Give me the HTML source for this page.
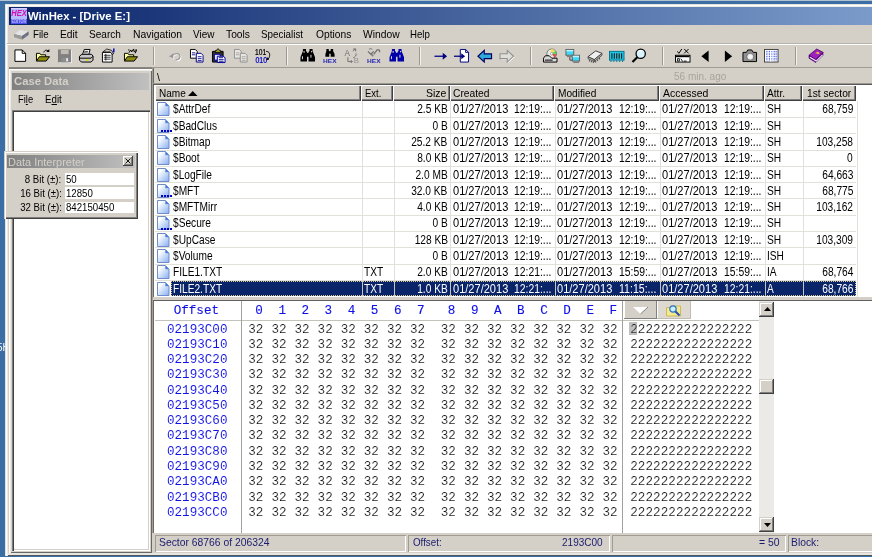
<!DOCTYPE html>
<html><head><meta charset="utf-8"><title>WinHex - [Drive E:]</title>
<style>
html,body{margin:0;padding:0}
body{width:872px;height:557px;overflow:hidden;position:relative;background:#3a6ea5;font-family:"Liberation Sans",sans-serif;font-size:11px;color:#000}
#root{position:absolute;left:0;top:0;width:872px;height:557px;will-change:transform}
.a{position:absolute}
.t{position:absolute;white-space:pre;line-height:1;transform-origin:0 0}
.r{position:absolute;white-space:pre;line-height:1;transform-origin:100% 0;text-align:right}
.hx{position:absolute;white-space:pre;line-height:1;font-family:"Liberation Mono",monospace;font-size:12.6px;color:#101010;-webkit-text-stroke:0.15px #fff}
.hd{position:absolute;background:#d4d0c8;box-shadow:inset 1px 1px 0 #fff, inset -1px -1px 0 #404040, inset -2px -2px 0 #808080}
svg{position:absolute;overflow:visible}
</style></head><body><div id="root">
<div class="a" style="left:0;top:0;width:900px;height:1px;background:#b4c2d0"></div>
<div class="t" style="left:-3.0px;top:343.0px;font-size:10.00px;color:#fff;transform:scaleX(1.000);">5H</div>
<div class="a" style="left:5px;top:4px;width:880px;height:552px;background:#d4d0c8;box-shadow:inset 1px 1px 0 #e4e2dc, inset 2px 2px 0 #fff, inset 3px 3px 0 #eceae4, inset 0 -1px 0 #505860, inset 0 -3px 0 #e8e6e0"></div>
<div class="a" style="left:9px;top:7px;width:1200px;height:18px;background:linear-gradient(90deg,#0a246a 0px,#a6caf0 1200px)"></div>
<svg style="left:11px;top:8px" width="16" height="16" viewBox="0 0 16 16"><rect width="16" height="16" fill="#b8b8ff"/><rect y="0" width="16" height="1" fill="#d8d0ff"/><rect y="11" width="16" height="5" fill="#5050f0"/><text x="0.2" y="7.7" font-family="Liberation Sans" font-weight="bold" font-style="italic" font-size="8.8" fill="#d010b0" textLength="15.6" lengthAdjust="spacingAndGlyphs">HEX</text><text x="0.5" y="14.8" font-family="Liberation Sans" font-weight="bold" font-size="4.6" fill="#b8b8ff" textLength="15" lengthAdjust="spacingAndGlyphs">EDITOR</text></svg>
<div class="t" style="left:28.3px;top:10.8px;font-size:11.20px;color:#fff;transform:scaleX(1.013);font-weight:bold;">WinHex - [Drive E:]</div>
<svg style="left:13px;top:28px" width="17" height="13" viewBox="0 0 17 13"><path d="M1 6 L7 1.5 L15.5 3.5 L15.5 7 L9 11.5 L1 9 Z" fill="#a0a0a0"/><path d="M1 6 L7 1.5 L15.5 3.5 L9 8 Z" fill="#e4e4e4"/><path d="M9 8 L15.5 3.5 L15.5 7 L9 11.5 Z" fill="#707078"/><path d="M1 6 L9 8 L9 11.5 L1 9 Z" fill="#9a9a9a"/><rect x="11.5" y="7" width="2" height="1.3" fill="#6a78d8" transform="rotate(-32 12.5 7.6)"/></svg>
<div class="t" style="left:33.4px;top:29.5px;font-size:10.40px;color:#000;transform:scaleX(0.931);">File</div><div class="t" style="left:60.3px;top:29.5px;font-size:10.40px;color:#000;transform:scaleX(0.988);">Edit</div><div class="t" style="left:89.4px;top:29.5px;font-size:10.40px;color:#000;transform:scaleX(0.968);">Search</div><div class="t" style="left:132.8px;top:29.5px;font-size:10.40px;color:#000;transform:scaleX(0.999);">Navigation</div><div class="t" style="left:193.3px;top:29.5px;font-size:10.40px;color:#000;transform:scaleX(0.957);">View</div><div class="t" style="left:226.1px;top:29.5px;font-size:10.40px;color:#000;transform:scaleX(0.989);">Tools</div><div class="t" style="left:261.4px;top:29.5px;font-size:10.40px;color:#000;transform:scaleX(0.946);">Specialist</div><div class="t" style="left:315.7px;top:29.5px;font-size:10.40px;color:#000;transform:scaleX(0.985);">Options</div><div class="t" style="left:362.8px;top:29.5px;font-size:10.40px;color:#000;transform:scaleX(0.990);">Window</div><div class="t" style="left:410.3px;top:29.5px;font-size:10.40px;color:#000;transform:scaleX(0.930);">Help</div>
<div class="a" style="left:7px;top:43px;width:870px;height:1px;background:#b8b4ac"></div><div class="a" style="left:7px;top:44px;width:870px;height:1px;background:#fff"></div>
<div class="a" style="left:9px;top:67px;width:870px;height:1px;background:#a09c94"></div><div class="a" style="left:9px;top:67px;width:143px;height:1px;background:#8a8680"></div><div class="a" style="left:9px;top:68px;width:143px;height:1px;background:#807c76"></div>
<div class="a" style="left:152.9px;top:47px;width:1px;height:18px;background:#9c988f"></div><div class="a" style="left:153.9px;top:47px;width:1px;height:18px;background:#f4f2ee"></div>
<div class="a" style="left:286.3px;top:47px;width:1px;height:18px;background:#9c988f"></div><div class="a" style="left:287.3px;top:47px;width:1px;height:18px;background:#f4f2ee"></div>
<div class="a" style="left:418.9px;top:47px;width:1px;height:18px;background:#9c988f"></div><div class="a" style="left:419.9px;top:47px;width:1px;height:18px;background:#f4f2ee"></div>
<div class="a" style="left:529.5px;top:47px;width:1px;height:18px;background:#9c988f"></div><div class="a" style="left:530.5px;top:47px;width:1px;height:18px;background:#f4f2ee"></div>
<div class="a" style="left:662.2px;top:47px;width:1px;height:18px;background:#9c988f"></div><div class="a" style="left:663.2px;top:47px;width:1px;height:18px;background:#f4f2ee"></div>
<div class="a" style="left:794.5px;top:47px;width:1px;height:18px;background:#9c988f"></div><div class="a" style="left:795.5px;top:47px;width:1px;height:18px;background:#f4f2ee"></div>
<svg style="left:13.2px;top:48.3px" width="15.5" height="15.5" viewBox="0 0 16 16"><path d="M2 2h7.5l3.5 3.5v8.3h-11z" fill="#fff" stroke="#000"/><path d="M9.5 2v3.5h3.5" fill="none" stroke="#000"/></svg>
<svg style="left:35.0px;top:48.3px" width="15.5" height="15.5" viewBox="0 0 16 16"><path d="M1.5 13.5v-8h3.5l1 1.5h5v2" fill="#ffffa0" stroke="#000"/><path d="M1.5 13.5l3-4.5h10.5l-3.5 4.5z" fill="#908c10" stroke="#000"/><path d="M9 4.5c1-2.5 3.5-3 5-1" fill="none" stroke="#000"/><path d="M14.8 1v3.2h-3.2z" fill="#000"/></svg>
<svg style="left:57.0px;top:48.3px" width="15.5" height="15.5" viewBox="0 0 16 16"><rect x="2.2" y="2.2" width="13" height="13.3" fill="#fff"/><rect x="1" y="1.5" width="13.5" height="13.3" fill="#808080"/><rect x="4" y="2" width="8" height="4.3" fill="#c0bcb4"/><rect x="4.5" y="10" width="7.5" height="4.8" fill="#8c8c8c"/><rect x="9.5" y="10.5" width="1.8" height="3.3" fill="#f0f0f0"/></svg>
<svg style="left:78.0px;top:48.3px" width="15.5" height="15.5" viewBox="0 0 16 16"><path d="M4.5 7l2-5.5h6l-1.5 5.5z" fill="#fff" stroke="#000"/><path d="M6.5 3.5h4M6 5h4" stroke="#000" stroke-width=".7"/><path d="M1.5 8.5l2.5-2h10l1.5 2v4l-2 2h-10l-2-2z" fill="#c8c8c8" stroke="#000"/><path d="M1.5 10.5h12l2-2" fill="none" stroke="#000"/><rect x="8" y="11.5" width="3" height="1.5" fill="#e8e000"/></svg>
<svg style="left:100.0px;top:48.3px" width="15.5" height="15.5" viewBox="0 0 16 16"><path d="M2.5 4.5h10v10h-10z" fill="#fff" stroke="#000"/><path d="M4 7.5h7M4 9.5h7M4 11.5h7M6 6v7" stroke="#000" stroke-width=".8"/><path d="M3 4l4-3 5 1.5 2 3.5-1.5 0.5-2-2.5h-4z" fill="#d4d0c8" stroke="#000" stroke-width=".8"/><rect x="13.5" y="0.5" width="1.5" height="4" fill="#0000c0"/></svg>
<svg style="left:122.5px;top:48.3px" width="15.5" height="15.5" viewBox="0 0 16 16"><path d="M1.5 13.5v-8h3.5l1 1.5h5v2" fill="#ffffa0" stroke="#000"/><path d="M1.5 13.5l3-4.5h10.5l-3.5 4.5z" fill="#908c10" stroke="#000"/><path d="M6 5l2-3 1 2 2-3 0.5 3 2.5-1.5-1.5 3" fill="none" stroke="#000" stroke-width="1"/><circle cx="13.5" cy="2" r=".8" fill="#000"/><circle cx="6" cy="2" r=".7" fill="#000"/></svg>
<svg style="left:168.0px;top:48.3px" width="15.5" height="15.5" viewBox="0 0 16 16"><g transform="translate(.8,.8)"><path d="M4 8.5C7 4.5 12.8 5 12.3 9.3 12 11.3 10.5 12.3 8 12.3" fill="none" stroke="#fff" stroke-width="1.3"/><path d="M1 8.8l4.5-3.5v5.8z" fill="#fff"/></g><path d="M4 8.5C7 4.5 12.8 5 12.3 9.3 12 11.3 10.5 12.3 8 12.3" fill="none" stroke="#989898" stroke-width="1.3"/><path d="M1 8.8l4.5-3.5v5.8z" fill="#989898"/></svg>
<svg style="left:189.0px;top:48.3px" width="15.5" height="15.5" viewBox="0 0 16 16"><path d="M1.5 1.5h5l2 2v7h-7z" fill="#fff" stroke="#000"/><path d="M3 5h3.5M3 7h3.5" stroke="#000080" stroke-width=".9"/><path d="M7.5 5.5h5l2 2v7h-7z" fill="#fff" stroke="#000080"/><path d="M9 9h4M9 11h4M9 13h4" stroke="#000080" stroke-width=".9"/></svg>
<svg style="left:211.0px;top:48.3px" width="15.5" height="15.5" viewBox="0 0 16 16"><path d="M1.5 3.5h11v11h-11z" fill="#303030" stroke="#000"/><path d="M4.5 4.5v-2h1.5l.5-1.5h1.5l.5 1.5h1.5v2z" fill="#b0a830" stroke="#000" stroke-width=".8"/><path d="M3.5 6.5h6v6h-6z" fill="#e8e8ff" stroke="#0000a0"/><path d="M6.5 8.5h6l2 1.5v5h-8z" fill="#fff" stroke="#0000a0"/><path d="M8 10h4.5M8 12h5M8 13.7h5" stroke="#000080" stroke-width=".9"/></svg>
<svg style="left:233.0px;top:48.3px" width="15.5" height="15.5" viewBox="0 0 16 16"><path d="M1.5 1.5h5l2 2v7h-7z" fill="#e8e6e0" stroke="#909090"/><path d="M3 5h3.5M3 7h3.5" stroke="#a0a0a0" stroke-width=".9"/><path d="M7.5 5.5h5l2 2v7h-7z" fill="#e8e6e0" stroke="#909090"/><path d="M9 9h4M9 11h4M9 13h4" stroke="#a0a0a0" stroke-width=".9"/></svg>
<svg style="left:254.5px;top:48.3px" width="15.5" height="15.5" viewBox="0 0 16 16"><text x="0" y="7.5" font-family="Liberation Sans" font-size="8.6" fill="#000" stroke="#000" stroke-width=".25" textLength="11.5" lengthAdjust="spacingAndGlyphs">101</text><text x="0.5" y="15.5" font-family="Liberation Sans" font-size="8.6" fill="#0000c0" stroke="#0000c0" stroke-width=".25" textLength="12" lengthAdjust="spacingAndGlyphs">010</text><path d="M11.5 3.5c3.5 0 4.5 3 3 6.5l-1.5 2" fill="none" stroke="#000" stroke-width="1"/><path d="M11.5 12.5l3-0.3-1.8-2.6z" fill="#000"/></svg>
<svg style="left:299.5px;top:48.3px" width="15.5" height="15.5" viewBox="0 0 16 16"><path d="M3 1h3.2v2l1 1.2v9.8h-6.7v-4.5l2.5-6.5zM13 1h-3.2v2l-1 1.2v9.8h6.7v-4.5l-2.5-6.5z" fill="#000"/><rect x="6.5" y="5" width="3" height="4" fill="#000"/><path d="M2.5 8.5v3M4.2 3v2M11.3 7v3M12 3v1.5" stroke="#fff" stroke-width=".9" fill="none"/></svg>
<svg style="left:321.5px;top:48.3px" width="15.5" height="15.5" viewBox="0 0 16 16"><path d="M4.5 1h2.5v1.5l0.7 0.8h0.6l0.7-0.8V1h2.5v2l1.5 3.5v2.5h-4V6h-1.5v3h-4V6.5L4.5 3z" fill="#000"/><text x="1" y="15.5" font-family="Liberation Sans" font-weight="bold" font-size="6.2" fill="#0000b0" fill-opacity=".85" textLength="14" lengthAdjust="spacingAndGlyphs">HEX</text></svg>
<svg style="left:343.5px;top:48.3px" width="15.5" height="15.5" viewBox="0 0 16 16"><text x="0.5" y="8" font-family="Liberation Sans" font-size="8.5" fill="#707070">A</text><text x="10" y="15.5" font-family="Liberation Sans" font-size="8" fill="#909090">B</text><path d="M9 3l3-2M12 1v2.5M12 1h-2.5M12.5 5.5c0.5 2-1 4-3 4.5M4 9.5v4.5h4.5M8.5 14l-1.5-1.5M8.5 14l-1.5 1.5" fill="none" stroke="#707070" stroke-width="1"/></svg>
<svg style="left:365.5px;top:48.3px" width="15.5" height="15.5" viewBox="0 0 16 16"><path d="M2 3.5l3 3 3-3M8 6.5l3.5-4.5 2.5 0M14 2v2.5M5 6l2.5 2.5" fill="none" stroke="#707070" stroke-width="1.3"/><path d="M3 1.5c1-1 2.5-1 3.5 0" stroke="#707070" fill="none"/><text x="1" y="15.5" font-family="Liberation Sans" font-weight="bold" font-size="6.2" fill="#0000b0" fill-opacity=".85" textLength="14" lengthAdjust="spacingAndGlyphs">HEX</text></svg>
<svg style="left:388.5px;top:48.3px" width="15.5" height="15.5" viewBox="0 0 16 16"><path d="M3 1h3.2v2l1 1.2v9.8h-6.7v-4.5l2.5-6.5zM13 1h-3.2v2l-1 1.2v9.8h6.7v-4.5l-2.5-6.5z" fill="#0000a8"/><rect x="6.5" y="5" width="3" height="4" fill="#0000a8"/><path d="M2.5 8.5v3M4.2 3v2M11.3 7v3M12 3v1.5" stroke="#fff" stroke-width=".9" fill="none"/></svg>
<svg style="left:433.5px;top:48.3px" width="15.5" height="15.5" viewBox="0 0 16 16"><path d="M0.5 8.5h11" stroke="#000080" stroke-width="1.3"/><path d="M9 5l4.5 3.5-4.5 3.5z" fill="#000080"/></svg>
<svg style="left:454.0px;top:48.3px" width="15.5" height="15.5" viewBox="0 0 16 16"><path d="M6.5 1.5h5.5l3 3v10h-8.5z" fill="#fff" stroke="#000080"/><path d="M12 1.5v3h3" fill="none" stroke="#000080"/><path d="M0 8.5h9" stroke="#000080" stroke-width="1.3"/><path d="M7.5 5.5l4 3-4 3z" fill="#000080"/></svg>
<svg style="left:476.5px;top:48.3px" width="15.5" height="15.5" viewBox="0 0 16 16"><path d="M1 8.5l6.5-6v3.5h7.5v5h-7.5v3.5z" fill="#30a8d8" stroke="#000060" stroke-width="1.2"/></svg>
<svg style="left:499.0px;top:48.3px" width="15.5" height="15.5" viewBox="0 0 16 16"><path d="M15 8.5l-6.5-6v3.5h-7.5v5h7.5v3.5z" fill="#fff" transform="translate(1,1)"/><path d="M15 8.5l-6.5-6v3.5h-7.5v5h7.5v3.5z" fill="#e0ded8" stroke="#909090" stroke-width="1.1"/></svg>
<svg style="left:542.0px;top:48.3px" width="15.5" height="15.5" viewBox="0 0 16 16"><circle cx="10" cy="6" r="5" fill="#e8e8e8" stroke="#606060" stroke-width=".8"/><path d="M10 6l4-3a5 5 0 0 1 1 3z" fill="#40d040"/><path d="M10 6l-1-5a5 5 0 0 1 4 1.5z" fill="#f0e040"/><path d="M10 6l5 .5a5 5 0 0 1-2 3.5z" fill="#e05050"/><circle cx="10" cy="6" r="1.3" fill="#fff" stroke="#606060" stroke-width=".5"/><path d="M1.5 10.5l2-2.5h4l2.5 2.5 h5.5v4h-14z" fill="#d8d8d8" stroke="#000" stroke-width="1"/><path d="M3 12.5h8" stroke="#000" stroke-width="1"/></svg>
<svg style="left:564.5px;top:48.3px" width="15.5" height="15.5" viewBox="0 0 16 16"><rect x="1" y="1.5" width="8" height="6" fill="#40d8f8" stroke="#606060"/><rect x="1.5" y="2" width="7" height="1.5" fill="#c0f4ff"/><rect x="2" y="8" width="6" height="1.5" fill="#808080"/><rect x="7.5" y="7.5" width="7.5" height="6" fill="#40d8f8" stroke="#606060"/><rect x="8" y="8" width="6.5" height="1.5" fill="#c0f4ff"/><rect x="8.5" y="14" width="6" height="1.5" fill="#808080"/><path d="M5 9.5v3h2.5" fill="none" stroke="#404040"/></svg>
<svg style="left:587.0px;top:48.3px" width="15.5" height="15.5" viewBox="0 0 16 16"><path d="M1 9l8-6 6.5 2.5-8 6.5z" fill="#f0f0f0" stroke="#404040" stroke-width="1"/><path d="M1 9v2l6.5 3v-2zM7.5 12v2l8-6.5v-2z" fill="#b0b0b0" stroke="#404040" stroke-width=".8"/><path d="M2.5 12.5v1.5M4.5 13.3v1.5M6.5 14v1.5M9 13.5v1.5M11 12v1.5M13 10.3v1.5" stroke="#404040" stroke-width="1"/></svg>
<svg style="left:609.0px;top:48.3px" width="15.5" height="15.5" viewBox="0 0 16 16"><rect x=".5" y="3.5" width="15" height="9" fill="#20c8e8" stroke="#007890" stroke-width="1"/><path d="M3 5.5v5.5M5.5 5.5v5.5M8 5.5v5.5M10.5 5.5v5.5M13 5.5v5.5" stroke="#202020" stroke-width="1.2"/><path d="M2 13v1.5M5 13v1.5M8 13v1.5M11 13v1.5M14 13v1.5" stroke="#007890" stroke-width="1"/></svg>
<svg style="left:630.5px;top:48.3px" width="15.5" height="15.5" viewBox="0 0 16 16"><circle cx="10" cy="6" r="4.8" fill="#d8f4ff" stroke="#000" stroke-width="1.3"/><path d="M7.5 4a3.5 3.5 0 0 1 4-1" stroke="#fff" stroke-width="1.2" fill="none"/><path d="M6.5 9.5l-5 5" stroke="#000" stroke-width="2.2"/></svg>
<svg style="left:674.5px;top:48.3px" width="15.5" height="15.5" viewBox="0 0 16 16"><path d="M2.5 3.5l1.5 2 3-4.5" fill="none" stroke="#000" stroke-width="1"/><path d="M9.5 1l4.5 4.5M14 1l-4.5 4.5" stroke="#000" stroke-width="1"/><rect x=".5" y="7.5" width="15" height="7" fill="#fff" stroke="#000"/><rect x="1" y="8" width="14" height="1.5" fill="#000"/><path d="M2.5 11h2v2.5h-2zM6 11l2 3M9 13.5h3" stroke="#000" stroke-width=".9" fill="none"/></svg>
<svg style="left:697.0px;top:48.3px" width="15.5" height="15.5" viewBox="0 0 16 16"><path d="M4.5 8.5l7.5-6v12z" fill="#000"/></svg>
<svg style="left:719.5px;top:48.3px" width="15.5" height="15.5" viewBox="0 0 16 16"><path d="M12.5 8.5l-7.5-6v12z" fill="#000"/></svg>
<svg style="left:741.5px;top:48.3px" width="15.5" height="15.5" viewBox="0 0 16 16"><path d="M1 4.5h3.5l1.5-2.5h4l1.5 2.5h3.5v9.5h-14z" fill="#909090" stroke="#000" stroke-width="1"/><circle cx="8.5" cy="9" r="3.6" fill="#e8e8e8" stroke="#606060" stroke-width=".8"/><circle cx="8.5" cy="9" r="2" fill="#f8f8f8"/></svg>
<svg style="left:764.0px;top:48.3px" width="15.5" height="15.5" viewBox="0 0 16 16"><rect x=".5" y="1.5" width="14" height="13" fill="#fff" stroke="#404040" stroke-width="1"/><path d="M3 3v10.5M5.5 3v10.5M8 3v10.5M10.5 3v10.5M12.5 3v10.5" stroke="#2040e0" stroke-width="1" stroke-dasharray="1.5 1"/><path d="M7 2v12" stroke="#fff" stroke-width="1.2"/></svg>
<svg style="left:807.5px;top:48.3px" width="15.5" height="15.5" viewBox="0 0 16 16"><path d="M1 7.5l8-6.5 6.5 3.5-7.5 7.5z" fill="#a020c0" stroke="#400060" stroke-width=".8"/><path d="M1 7.5v3l7 4.5 7.5-7.5v-3l-7.5 7.5z" fill="#6a0a90" stroke="#400060" stroke-width=".6"/><path d="M2 9.5l6.5 4 6.5-6.5" fill="none" stroke="#f0e8ff" stroke-width="1.1"/><path d="M7.5 5.5l3-2 1.5 3z" fill="#f0d020"/></svg>
<div class="a" style="left:9px;top:69px;width:143px;height:483.5px;background:#d4d0c8;box-shadow:inset 1px 1px 0 #fff, inset 2px 2px 0 #eceae4, inset -1px -1px 0 #686868"></div>
<div class="a" style="left:12.3px;top:72.6px;width:137.2px;height:17px;background:linear-gradient(90deg,#808080,#c0c0c0)"></div>
<div class="t" style="left:13.7px;top:75.8px;font-size:11.20px;color:#d4d0c8;transform:scaleX(1.008);font-weight:bold;">Case Data</div>
<div class="t" style="left:17.5px;top:94.5px;font-size:10.40px;color:#000;transform:scaleX(0.901);">Fi<u>l</u>e</div><div class="t" style="left:44.8px;top:94.5px;font-size:10.40px;color:#000;transform:scaleX(0.937);">E<u>d</u>it</div>
<div class="a" style="left:11.6px;top:109.5px;width:138px;height:441px;background:#fff;box-shadow:inset 1px 1px 0 #808080, inset 2px 2px 0 #404040, inset -1px -1px 0 #fff, inset -2px -2px 0 #d4d0c8"></div>
<div class="a" style="left:152px;top:68px;width:1px;height:465px;background:#a4a098"></div><div class="a" style="left:153px;top:68px;width:1px;height:465px;background:#686868"></div>
<div class="a" style="left:154px;top:69px;width:721px;height:15px;background:#d4d0c8"></div>
<div class="t" style="left:157.0px;top:71.5px;font-size:10.50px;color:#000;transform:scaleX(1.000);">\</div><div class="t" style="left:673.8px;top:72.3px;font-size:10.20px;color:#a8a49c;transform:scaleX(0.983);">56 min. ago</div>
<div class="a" style="left:154px;top:84px;width:721px;height:213px;background:#fff"></div><div class="a" style="left:153px;top:83px;width:722px;height:1px;background:#9c9890"></div><div class="a" style="left:153px;top:84px;width:722px;height:1px;background:#585858"></div>
<div class="hd" style="left:155.0px;top:85px;width:206.3px;height:16.2px"></div><div class="t" style="left:158.5px;top:87.9px;font-size:11.30px;color:#000;transform:scaleX(0.889);">Name</div>
<div class="hd" style="left:361.3px;top:85px;width:31.7px;height:16.2px"></div><div class="t" style="left:365.2px;top:87.9px;font-size:11.30px;color:#000;transform:scaleX(0.837);">Ext.</div>
<div class="hd" style="left:393.0px;top:85px;width:56.6px;height:16.2px"></div><div class="t" style="left:425.5px;top:87.9px;font-size:11.30px;color:#000;transform:scaleX(0.928);">Size</div>
<div class="hd" style="left:449.6px;top:85px;width:104.8px;height:16.2px"></div><div class="t" style="left:453.2px;top:87.9px;font-size:11.30px;color:#000;transform:scaleX(0.908);">Created</div>
<div class="hd" style="left:554.4px;top:85px;width:105.0px;height:16.2px"></div><div class="t" style="left:558.3px;top:87.9px;font-size:11.30px;color:#000;transform:scaleX(0.897);">Modified</div>
<div class="hd" style="left:659.4px;top:85px;width:104.6px;height:16.2px"></div><div class="t" style="left:662.5px;top:87.9px;font-size:11.30px;color:#000;transform:scaleX(0.927);">Accessed</div>
<div class="hd" style="left:764.0px;top:85px;width:38.0px;height:16.2px"></div><div class="t" style="left:767.3px;top:87.9px;font-size:11.30px;color:#000;transform:scaleX(0.896);">Attr.</div>
<div class="hd" style="left:802.0px;top:85px;width:54.0px;height:16.2px"></div><div class="t" style="left:807.3px;top:87.9px;font-size:11.30px;color:#000;transform:scaleX(0.904);">1st sector</div>
<svg style="left:187.8px;top:90.5px" width="9.5" height="5" viewBox="0 0 9.5 5"><path d="M0 5L4.75 0L9.5 5z" fill="#000"/></svg>
<div class="a" style="left:361.9px;top:101px;width:1px;height:196px;background:#e2e0da"></div><div class="a" style="left:393.6px;top:101px;width:1px;height:196px;background:#e2e0da"></div><div class="a" style="left:450.2px;top:101px;width:1px;height:196px;background:#e2e0da"></div><div class="a" style="left:555.0px;top:101px;width:1px;height:196px;background:#e2e0da"></div><div class="a" style="left:660.0px;top:101px;width:1px;height:196px;background:#e2e0da"></div><div class="a" style="left:764.6px;top:101px;width:1px;height:196px;background:#e2e0da"></div><div class="a" style="left:802.6px;top:101px;width:1px;height:196px;background:#e2e0da"></div><div class="a" style="left:856.6px;top:101px;width:1px;height:196px;background:#e2e0da"></div>
<svg width="0" height="0" style="left:0;top:0"><defs><linearGradient id="fg" x1="0" y1="0" x2="1" y2="1"><stop offset="0.2" stop-color="#ffffff"/><stop offset="1" stop-color="#86aef2"/></linearGradient></defs></svg>
<svg style="left:156.5px;top:102.4px" width="13" height="14" viewBox="0 0 13 14"><path d="M0.5 0.5h8l3.5 3.5v9.5h-11.5z" fill="url(#fg)" stroke="#6c8ccc" stroke-width="1"/><path d="M8.5 0.5v3.5h3.5z" fill="#3878e0" stroke="#7a9ad4" stroke-width=".6"/></svg><div class="t" style="left:173.3px;top:104.4px;font-size:11.90px;color:#000;transform:scaleX(0.855);">$AttrDef</div><div class="r" style="right:424.4px;top:104.4px;font-size:11.90px;color:#000;transform:scaleX(0.855);">2.5 KB</div><div class="t" style="left:452.6px;top:104.4px;font-size:11.90px;color:#000;transform:scaleX(0.929);">01/27/2013</div><div class="t" style="left:513.8px;top:104.4px;font-size:11.90px;color:#000;transform:scaleX(0.870);">12:19:...</div><div class="t" style="left:557.4px;top:104.4px;font-size:11.90px;color:#000;transform:scaleX(0.929);">01/27/2013</div><div class="t" style="left:618.6px;top:104.4px;font-size:11.90px;color:#000;transform:scaleX(0.870);">12:19:...</div><div class="t" style="left:662.4px;top:104.4px;font-size:11.90px;color:#000;transform:scaleX(0.929);">01/27/2013</div><div class="t" style="left:723.6px;top:104.4px;font-size:11.90px;color:#000;transform:scaleX(0.870);">12:19:...</div><div class="t" style="left:767.0px;top:104.4px;font-size:11.90px;color:#000;transform:scaleX(0.855);">SH</div><div class="r" style="right:19.0px;top:104.4px;font-size:11.90px;color:#000;transform:scaleX(0.855);">68,759</div>
<div class="a" style="left:155px;top:117.0px;width:700.5px;height:1px;background:#e2e0da"></div><svg style="left:156.5px;top:118.7px" width="13" height="14" viewBox="0 0 13 14"><path d="M0.5 0.5h8l3.5 3.5v9.5h-11.5z" fill="url(#fg)" stroke="#6c8ccc" stroke-width="1"/><path d="M8.5 0.5v3.5h3.5z" fill="#3878e0" stroke="#7a9ad4" stroke-width=".6"/></svg><div class="a" style="left:161.2px;top:129.8px;width:12px;height:2px;background:repeating-linear-gradient(90deg,#0000c0 0,#0000c0 2px,transparent 2px,transparent 3px)"></div><div class="t" style="left:173.3px;top:120.7px;font-size:11.90px;color:#000;transform:scaleX(0.855);">$BadClus</div><div class="r" style="right:424.4px;top:120.7px;font-size:11.90px;color:#000;transform:scaleX(0.855);">0 B</div><div class="t" style="left:452.6px;top:120.7px;font-size:11.90px;color:#000;transform:scaleX(0.929);">01/27/2013</div><div class="t" style="left:513.8px;top:120.7px;font-size:11.90px;color:#000;transform:scaleX(0.870);">12:19:...</div><div class="t" style="left:557.4px;top:120.7px;font-size:11.90px;color:#000;transform:scaleX(0.929);">01/27/2013</div><div class="t" style="left:618.6px;top:120.7px;font-size:11.90px;color:#000;transform:scaleX(0.870);">12:19:...</div><div class="t" style="left:662.4px;top:120.7px;font-size:11.90px;color:#000;transform:scaleX(0.929);">01/27/2013</div><div class="t" style="left:723.6px;top:120.7px;font-size:11.90px;color:#000;transform:scaleX(0.870);">12:19:...</div><div class="t" style="left:767.0px;top:120.7px;font-size:11.90px;color:#000;transform:scaleX(0.855);">SH</div>
<div class="a" style="left:155px;top:133.3px;width:700.5px;height:1px;background:#e2e0da"></div><svg style="left:156.5px;top:135.0px" width="13" height="14" viewBox="0 0 13 14"><path d="M0.5 0.5h8l3.5 3.5v9.5h-11.5z" fill="url(#fg)" stroke="#6c8ccc" stroke-width="1"/><path d="M8.5 0.5v3.5h3.5z" fill="#3878e0" stroke="#7a9ad4" stroke-width=".6"/></svg><div class="t" style="left:173.3px;top:137.0px;font-size:11.90px;color:#000;transform:scaleX(0.855);">$Bitmap</div><div class="r" style="right:424.4px;top:137.0px;font-size:11.90px;color:#000;transform:scaleX(0.855);">25.2 KB</div><div class="t" style="left:452.6px;top:137.0px;font-size:11.90px;color:#000;transform:scaleX(0.929);">01/27/2013</div><div class="t" style="left:513.8px;top:137.0px;font-size:11.90px;color:#000;transform:scaleX(0.870);">12:19:...</div><div class="t" style="left:557.4px;top:137.0px;font-size:11.90px;color:#000;transform:scaleX(0.929);">01/27/2013</div><div class="t" style="left:618.6px;top:137.0px;font-size:11.90px;color:#000;transform:scaleX(0.870);">12:19:...</div><div class="t" style="left:662.4px;top:137.0px;font-size:11.90px;color:#000;transform:scaleX(0.929);">01/27/2013</div><div class="t" style="left:723.6px;top:137.0px;font-size:11.90px;color:#000;transform:scaleX(0.870);">12:19:...</div><div class="t" style="left:767.0px;top:137.0px;font-size:11.90px;color:#000;transform:scaleX(0.855);">SH</div><div class="r" style="right:19.0px;top:137.0px;font-size:11.90px;color:#000;transform:scaleX(0.855);">103,258</div>
<div class="a" style="left:155px;top:149.5px;width:700.5px;height:1px;background:#e2e0da"></div><svg style="left:156.5px;top:151.2px" width="13" height="14" viewBox="0 0 13 14"><path d="M0.5 0.5h8l3.5 3.5v9.5h-11.5z" fill="url(#fg)" stroke="#6c8ccc" stroke-width="1"/><path d="M8.5 0.5v3.5h3.5z" fill="#3878e0" stroke="#7a9ad4" stroke-width=".6"/></svg><div class="t" style="left:173.3px;top:153.2px;font-size:11.90px;color:#000;transform:scaleX(0.855);">$Boot</div><div class="r" style="right:424.4px;top:153.2px;font-size:11.90px;color:#000;transform:scaleX(0.855);">8.0 KB</div><div class="t" style="left:452.6px;top:153.2px;font-size:11.90px;color:#000;transform:scaleX(0.929);">01/27/2013</div><div class="t" style="left:513.8px;top:153.2px;font-size:11.90px;color:#000;transform:scaleX(0.870);">12:19:...</div><div class="t" style="left:557.4px;top:153.2px;font-size:11.90px;color:#000;transform:scaleX(0.929);">01/27/2013</div><div class="t" style="left:618.6px;top:153.2px;font-size:11.90px;color:#000;transform:scaleX(0.870);">12:19:...</div><div class="t" style="left:662.4px;top:153.2px;font-size:11.90px;color:#000;transform:scaleX(0.929);">01/27/2013</div><div class="t" style="left:723.6px;top:153.2px;font-size:11.90px;color:#000;transform:scaleX(0.870);">12:19:...</div><div class="t" style="left:767.0px;top:153.2px;font-size:11.90px;color:#000;transform:scaleX(0.855);">SH</div><div class="r" style="right:19.0px;top:153.2px;font-size:11.90px;color:#000;transform:scaleX(0.855);">0</div>
<div class="a" style="left:155px;top:165.8px;width:700.5px;height:1px;background:#e2e0da"></div><svg style="left:156.5px;top:167.5px" width="13" height="14" viewBox="0 0 13 14"><path d="M0.5 0.5h8l3.5 3.5v9.5h-11.5z" fill="url(#fg)" stroke="#6c8ccc" stroke-width="1"/><path d="M8.5 0.5v3.5h3.5z" fill="#3878e0" stroke="#7a9ad4" stroke-width=".6"/></svg><div class="t" style="left:173.3px;top:169.5px;font-size:11.90px;color:#000;transform:scaleX(0.855);">$LogFile</div><div class="r" style="right:424.4px;top:169.5px;font-size:11.90px;color:#000;transform:scaleX(0.855);">2.0 MB</div><div class="t" style="left:452.6px;top:169.5px;font-size:11.90px;color:#000;transform:scaleX(0.929);">01/27/2013</div><div class="t" style="left:513.8px;top:169.5px;font-size:11.90px;color:#000;transform:scaleX(0.870);">12:19:...</div><div class="t" style="left:557.4px;top:169.5px;font-size:11.90px;color:#000;transform:scaleX(0.929);">01/27/2013</div><div class="t" style="left:618.6px;top:169.5px;font-size:11.90px;color:#000;transform:scaleX(0.870);">12:19:...</div><div class="t" style="left:662.4px;top:169.5px;font-size:11.90px;color:#000;transform:scaleX(0.929);">01/27/2013</div><div class="t" style="left:723.6px;top:169.5px;font-size:11.90px;color:#000;transform:scaleX(0.870);">12:19:...</div><div class="t" style="left:767.0px;top:169.5px;font-size:11.90px;color:#000;transform:scaleX(0.855);">SH</div><div class="r" style="right:19.0px;top:169.5px;font-size:11.90px;color:#000;transform:scaleX(0.855);">64,663</div>
<div class="a" style="left:155px;top:182.1px;width:700.5px;height:1px;background:#e2e0da"></div><svg style="left:156.5px;top:183.8px" width="13" height="14" viewBox="0 0 13 14"><path d="M0.5 0.5h8l3.5 3.5v9.5h-11.5z" fill="url(#fg)" stroke="#6c8ccc" stroke-width="1"/><path d="M8.5 0.5v3.5h3.5z" fill="#3878e0" stroke="#7a9ad4" stroke-width=".6"/></svg><div class="a" style="left:161.2px;top:194.9px;width:12px;height:2px;background:repeating-linear-gradient(90deg,#0000c0 0,#0000c0 2px,transparent 2px,transparent 3px)"></div><div class="t" style="left:173.3px;top:185.8px;font-size:11.90px;color:#000;transform:scaleX(0.855);">$MFT</div><div class="r" style="right:424.4px;top:185.8px;font-size:11.90px;color:#000;transform:scaleX(0.855);">32.0 KB</div><div class="t" style="left:452.6px;top:185.8px;font-size:11.90px;color:#000;transform:scaleX(0.929);">01/27/2013</div><div class="t" style="left:513.8px;top:185.8px;font-size:11.90px;color:#000;transform:scaleX(0.870);">12:19:...</div><div class="t" style="left:557.4px;top:185.8px;font-size:11.90px;color:#000;transform:scaleX(0.929);">01/27/2013</div><div class="t" style="left:618.6px;top:185.8px;font-size:11.90px;color:#000;transform:scaleX(0.870);">12:19:...</div><div class="t" style="left:662.4px;top:185.8px;font-size:11.90px;color:#000;transform:scaleX(0.929);">01/27/2013</div><div class="t" style="left:723.6px;top:185.8px;font-size:11.90px;color:#000;transform:scaleX(0.870);">12:19:...</div><div class="t" style="left:767.0px;top:185.8px;font-size:11.90px;color:#000;transform:scaleX(0.855);">SH</div><div class="r" style="right:19.0px;top:185.8px;font-size:11.90px;color:#000;transform:scaleX(0.855);">68,775</div>
<div class="a" style="left:155px;top:198.4px;width:700.5px;height:1px;background:#e2e0da"></div><svg style="left:156.5px;top:200.1px" width="13" height="14" viewBox="0 0 13 14"><path d="M0.5 0.5h8l3.5 3.5v9.5h-11.5z" fill="url(#fg)" stroke="#6c8ccc" stroke-width="1"/><path d="M8.5 0.5v3.5h3.5z" fill="#3878e0" stroke="#7a9ad4" stroke-width=".6"/></svg><div class="t" style="left:173.3px;top:202.1px;font-size:11.90px;color:#000;transform:scaleX(0.855);">$MFTMirr</div><div class="r" style="right:424.4px;top:202.1px;font-size:11.90px;color:#000;transform:scaleX(0.855);">4.0 KB</div><div class="t" style="left:452.6px;top:202.1px;font-size:11.90px;color:#000;transform:scaleX(0.929);">01/27/2013</div><div class="t" style="left:513.8px;top:202.1px;font-size:11.90px;color:#000;transform:scaleX(0.870);">12:19:...</div><div class="t" style="left:557.4px;top:202.1px;font-size:11.90px;color:#000;transform:scaleX(0.929);">01/27/2013</div><div class="t" style="left:618.6px;top:202.1px;font-size:11.90px;color:#000;transform:scaleX(0.870);">12:19:...</div><div class="t" style="left:662.4px;top:202.1px;font-size:11.90px;color:#000;transform:scaleX(0.929);">01/27/2013</div><div class="t" style="left:723.6px;top:202.1px;font-size:11.90px;color:#000;transform:scaleX(0.870);">12:19:...</div><div class="t" style="left:767.0px;top:202.1px;font-size:11.90px;color:#000;transform:scaleX(0.855);">SH</div><div class="r" style="right:19.0px;top:202.1px;font-size:11.90px;color:#000;transform:scaleX(0.855);">103,162</div>
<div class="a" style="left:155px;top:214.7px;width:700.5px;height:1px;background:#e2e0da"></div><svg style="left:156.5px;top:216.4px" width="13" height="14" viewBox="0 0 13 14"><path d="M0.5 0.5h8l3.5 3.5v9.5h-11.5z" fill="url(#fg)" stroke="#6c8ccc" stroke-width="1"/><path d="M8.5 0.5v3.5h3.5z" fill="#3878e0" stroke="#7a9ad4" stroke-width=".6"/></svg><div class="a" style="left:161.2px;top:227.5px;width:12px;height:2px;background:repeating-linear-gradient(90deg,#0000c0 0,#0000c0 2px,transparent 2px,transparent 3px)"></div><div class="t" style="left:173.3px;top:218.4px;font-size:11.90px;color:#000;transform:scaleX(0.855);">$Secure</div><div class="r" style="right:424.4px;top:218.4px;font-size:11.90px;color:#000;transform:scaleX(0.855);">0 B</div><div class="t" style="left:452.6px;top:218.4px;font-size:11.90px;color:#000;transform:scaleX(0.929);">01/27/2013</div><div class="t" style="left:513.8px;top:218.4px;font-size:11.90px;color:#000;transform:scaleX(0.870);">12:19:...</div><div class="t" style="left:557.4px;top:218.4px;font-size:11.90px;color:#000;transform:scaleX(0.929);">01/27/2013</div><div class="t" style="left:618.6px;top:218.4px;font-size:11.90px;color:#000;transform:scaleX(0.870);">12:19:...</div><div class="t" style="left:662.4px;top:218.4px;font-size:11.90px;color:#000;transform:scaleX(0.929);">01/27/2013</div><div class="t" style="left:723.6px;top:218.4px;font-size:11.90px;color:#000;transform:scaleX(0.870);">12:19:...</div><div class="t" style="left:767.0px;top:218.4px;font-size:11.90px;color:#000;transform:scaleX(0.855);">SH</div>
<div class="a" style="left:155px;top:230.9px;width:700.5px;height:1px;background:#e2e0da"></div><svg style="left:156.5px;top:232.6px" width="13" height="14" viewBox="0 0 13 14"><path d="M0.5 0.5h8l3.5 3.5v9.5h-11.5z" fill="url(#fg)" stroke="#6c8ccc" stroke-width="1"/><path d="M8.5 0.5v3.5h3.5z" fill="#3878e0" stroke="#7a9ad4" stroke-width=".6"/></svg><div class="t" style="left:173.3px;top:234.6px;font-size:11.90px;color:#000;transform:scaleX(0.855);">$UpCase</div><div class="r" style="right:424.4px;top:234.6px;font-size:11.90px;color:#000;transform:scaleX(0.855);">128 KB</div><div class="t" style="left:452.6px;top:234.6px;font-size:11.90px;color:#000;transform:scaleX(0.929);">01/27/2013</div><div class="t" style="left:513.8px;top:234.6px;font-size:11.90px;color:#000;transform:scaleX(0.870);">12:19:...</div><div class="t" style="left:557.4px;top:234.6px;font-size:11.90px;color:#000;transform:scaleX(0.929);">01/27/2013</div><div class="t" style="left:618.6px;top:234.6px;font-size:11.90px;color:#000;transform:scaleX(0.870);">12:19:...</div><div class="t" style="left:662.4px;top:234.6px;font-size:11.90px;color:#000;transform:scaleX(0.929);">01/27/2013</div><div class="t" style="left:723.6px;top:234.6px;font-size:11.90px;color:#000;transform:scaleX(0.870);">12:19:...</div><div class="t" style="left:767.0px;top:234.6px;font-size:11.90px;color:#000;transform:scaleX(0.855);">SH</div><div class="r" style="right:19.0px;top:234.6px;font-size:11.90px;color:#000;transform:scaleX(0.855);">103,309</div>
<div class="a" style="left:155px;top:247.2px;width:700.5px;height:1px;background:#e2e0da"></div><svg style="left:156.5px;top:248.9px" width="13" height="14" viewBox="0 0 13 14"><path d="M0.5 0.5h8l3.5 3.5v9.5h-11.5z" fill="url(#fg)" stroke="#6c8ccc" stroke-width="1"/><path d="M8.5 0.5v3.5h3.5z" fill="#3878e0" stroke="#7a9ad4" stroke-width=".6"/></svg><div class="t" style="left:173.3px;top:250.9px;font-size:11.90px;color:#000;transform:scaleX(0.855);">$Volume</div><div class="r" style="right:424.4px;top:250.9px;font-size:11.90px;color:#000;transform:scaleX(0.855);">0 B</div><div class="t" style="left:452.6px;top:250.9px;font-size:11.90px;color:#000;transform:scaleX(0.929);">01/27/2013</div><div class="t" style="left:513.8px;top:250.9px;font-size:11.90px;color:#000;transform:scaleX(0.870);">12:19:...</div><div class="t" style="left:557.4px;top:250.9px;font-size:11.90px;color:#000;transform:scaleX(0.929);">01/27/2013</div><div class="t" style="left:618.6px;top:250.9px;font-size:11.90px;color:#000;transform:scaleX(0.870);">12:19:...</div><div class="t" style="left:662.4px;top:250.9px;font-size:11.90px;color:#000;transform:scaleX(0.929);">01/27/2013</div><div class="t" style="left:723.6px;top:250.9px;font-size:11.90px;color:#000;transform:scaleX(0.870);">12:19:...</div><div class="t" style="left:767.0px;top:250.9px;font-size:11.90px;color:#000;transform:scaleX(0.855);">ISH</div>
<div class="a" style="left:155px;top:263.5px;width:700.5px;height:1px;background:#e2e0da"></div><svg style="left:156.5px;top:265.2px" width="13" height="14" viewBox="0 0 13 14"><path d="M0.5 0.5h8l3.5 3.5v9.5h-11.5z" fill="url(#fg)" stroke="#6c8ccc" stroke-width="1"/><path d="M8.5 0.5v3.5h3.5z" fill="#3878e0" stroke="#7a9ad4" stroke-width=".6"/></svg><div class="t" style="left:173.3px;top:267.2px;font-size:11.90px;color:#000;transform:scaleX(0.855);">FILE1.TXT</div><div class="t" style="left:364.3px;top:267.2px;font-size:11.90px;color:#000;transform:scaleX(0.855);">TXT</div><div class="r" style="right:424.4px;top:267.2px;font-size:11.90px;color:#000;transform:scaleX(0.855);">2.0 KB</div><div class="t" style="left:452.6px;top:267.2px;font-size:11.90px;color:#000;transform:scaleX(0.929);">01/27/2013</div><div class="t" style="left:513.8px;top:267.2px;font-size:11.90px;color:#000;transform:scaleX(0.870);">12:21:...</div><div class="t" style="left:557.4px;top:267.2px;font-size:11.90px;color:#000;transform:scaleX(0.929);">01/27/2013</div><div class="t" style="left:618.6px;top:267.2px;font-size:11.90px;color:#000;transform:scaleX(0.870);">15:59:...</div><div class="t" style="left:662.4px;top:267.2px;font-size:11.90px;color:#000;transform:scaleX(0.929);">01/27/2013</div><div class="t" style="left:723.6px;top:267.2px;font-size:11.90px;color:#000;transform:scaleX(0.870);">15:59:...</div><div class="t" style="left:767.0px;top:267.2px;font-size:11.90px;color:#000;transform:scaleX(0.855);">IA</div><div class="r" style="right:19.0px;top:267.2px;font-size:11.90px;color:#000;transform:scaleX(0.855);">68,764</div>
<div class="a" style="left:155px;top:279.8px;width:700.5px;height:1px;background:#e2e0da"></div><div class="a" style="left:170.8px;top:281.1px;width:685.2px;height:15.4px;background:#0a246a;outline:1px dotted #d8c890;outline-offset:-1px"></div><div class="a" style="left:361.9px;top:281.1px;width:1px;height:15.4px;background:#c8c4bc"></div><div class="a" style="left:393.6px;top:281.1px;width:1px;height:15.4px;background:#c8c4bc"></div><div class="a" style="left:450.2px;top:281.1px;width:1px;height:15.4px;background:#c8c4bc"></div><div class="a" style="left:555.0px;top:281.1px;width:1px;height:15.4px;background:#c8c4bc"></div><div class="a" style="left:660.0px;top:281.1px;width:1px;height:15.4px;background:#c8c4bc"></div><div class="a" style="left:764.6px;top:281.1px;width:1px;height:15.4px;background:#c8c4bc"></div><div class="a" style="left:802.6px;top:281.1px;width:1px;height:15.4px;background:#c8c4bc"></div><svg style="left:156.5px;top:281.5px" width="13" height="14" viewBox="0 0 13 14"><path d="M0.5 0.5h8l3.5 3.5v9.5h-11.5z" fill="url(#fg)" stroke="#6c8ccc" stroke-width="1"/><path d="M8.5 0.5v3.5h3.5z" fill="#3878e0" stroke="#7a9ad4" stroke-width=".6"/></svg><div class="t" style="left:173.3px;top:283.5px;font-size:11.90px;color:#fff;transform:scaleX(0.855);">FILE2.TXT</div><div class="t" style="left:364.3px;top:283.5px;font-size:11.90px;color:#fff;transform:scaleX(0.855);">TXT</div><div class="r" style="right:424.4px;top:283.5px;font-size:11.90px;color:#fff;transform:scaleX(0.855);">1.0 KB</div><div class="t" style="left:452.6px;top:283.5px;font-size:11.90px;color:#fff;transform:scaleX(0.929);">01/27/2013</div><div class="t" style="left:513.8px;top:283.5px;font-size:11.90px;color:#fff;transform:scaleX(0.870);">12:21:...</div><div class="t" style="left:557.4px;top:283.5px;font-size:11.90px;color:#fff;transform:scaleX(0.929);">01/27/2013</div><div class="t" style="left:618.6px;top:283.5px;font-size:11.90px;color:#fff;transform:scaleX(0.888);">11:15:...</div><div class="t" style="left:662.4px;top:283.5px;font-size:11.90px;color:#fff;transform:scaleX(0.929);">01/27/2013</div><div class="t" style="left:723.6px;top:283.5px;font-size:11.90px;color:#fff;transform:scaleX(0.870);">12:21:...</div><div class="t" style="left:767.0px;top:283.5px;font-size:11.90px;color:#fff;transform:scaleX(0.855);">A</div><div class="r" style="right:19.0px;top:283.5px;font-size:11.90px;color:#fff;transform:scaleX(0.855);">68,766</div>
<div class="a" style="left:153px;top:297px;width:722px;height:3.3px;background:#d4d0c8"></div>
<div class="a" style="left:154px;top:300px;width:721px;height:233px;background:#fff"></div><div class="a" style="left:153px;top:300px;width:722px;height:1px;background:#606060"></div><div class="a" style="left:152px;top:300px;width:1px;height:233px;background:#a4a098"></div><div class="a" style="left:153px;top:300px;width:1px;height:233px;background:#686868"></div>
<div class="a" style="left:155px;top:319.5px;width:604px;height:1px;background:#c4c2bc"></div><div class="a" style="left:241px;top:301px;width:1px;height:232px;background:#a0a0a0"></div><div class="a" style="left:621.5px;top:301px;width:1px;height:232px;background:#a0a0a0"></div>
<div class="hx" style="left:173.7px;top:305.3px;color:#1010e8;-webkit-text-stroke:0.1px #1010e8">Offset</div>
<div class="hx" style="left:255.3px;top:305.3px;color:#1010e8;-webkit-text-stroke:0.12px #1010e8">0</div><div class="hx" style="left:278.4px;top:305.3px;color:#1010e8;-webkit-text-stroke:0.12px #1010e8">1</div><div class="hx" style="left:301.5px;top:305.3px;color:#1010e8;-webkit-text-stroke:0.12px #1010e8">2</div><div class="hx" style="left:324.6px;top:305.3px;color:#1010e8;-webkit-text-stroke:0.12px #1010e8">3</div><div class="hx" style="left:347.7px;top:305.3px;color:#1010e8;-webkit-text-stroke:0.12px #1010e8">4</div><div class="hx" style="left:370.8px;top:305.3px;color:#1010e8;-webkit-text-stroke:0.12px #1010e8">5</div><div class="hx" style="left:393.9px;top:305.3px;color:#1010e8;-webkit-text-stroke:0.12px #1010e8">6</div><div class="hx" style="left:417.0px;top:305.3px;color:#1010e8;-webkit-text-stroke:0.12px #1010e8">7</div><div class="hx" style="left:447.8px;top:305.3px;color:#1010e8;-webkit-text-stroke:0.12px #1010e8">8</div><div class="hx" style="left:470.9px;top:305.3px;color:#1010e8;-webkit-text-stroke:0.12px #1010e8">9</div><div class="hx" style="left:494.0px;top:305.3px;color:#1010e8;-webkit-text-stroke:0.12px #1010e8">A</div><div class="hx" style="left:517.1px;top:305.3px;color:#1010e8;-webkit-text-stroke:0.12px #1010e8">B</div><div class="hx" style="left:540.2px;top:305.3px;color:#1010e8;-webkit-text-stroke:0.12px #1010e8">C</div><div class="hx" style="left:563.3px;top:305.3px;color:#1010e8;-webkit-text-stroke:0.12px #1010e8">D</div><div class="hx" style="left:586.4px;top:305.3px;color:#1010e8;-webkit-text-stroke:0.12px #1010e8">E</div><div class="hx" style="left:609.5px;top:305.3px;color:#1010e8;-webkit-text-stroke:0.12px #1010e8">F</div>
<div class="a" style="left:629.2px;top:322px;width:7.6px;height:12.6px;background:#c0c0c0"></div>
<div class="hx" style="left:167px;top:323.6px;color:#1010e8;-webkit-text-stroke:0.05px #fff">02193C00</div><div class="hx" style="left:248.3px;top:323.6px">32</div><div class="hx" style="left:271.4px;top:323.6px">32</div><div class="hx" style="left:294.5px;top:323.6px">32</div><div class="hx" style="left:317.6px;top:323.6px">32</div><div class="hx" style="left:340.7px;top:323.6px">32</div><div class="hx" style="left:363.8px;top:323.6px">32</div><div class="hx" style="left:386.9px;top:323.6px">32</div><div class="hx" style="left:410.0px;top:323.6px">32</div><div class="hx" style="left:440.8px;top:323.6px">32</div><div class="hx" style="left:463.9px;top:323.6px">32</div><div class="hx" style="left:487.0px;top:323.6px">32</div><div class="hx" style="left:510.1px;top:323.6px">32</div><div class="hx" style="left:533.2px;top:323.6px">32</div><div class="hx" style="left:556.3px;top:323.6px">32</div><div class="hx" style="left:579.4px;top:323.6px">32</div><div class="hx" style="left:602.5px;top:323.6px">32</div><div class="hx" style="left:630.2px;top:323.6px;letter-spacing:0.075px">2222222222222222</div>
<div class="hx" style="left:167px;top:338.9px;color:#1010e8;-webkit-text-stroke:0.05px #fff">02193C10</div><div class="hx" style="left:248.3px;top:338.9px">32</div><div class="hx" style="left:271.4px;top:338.9px">32</div><div class="hx" style="left:294.5px;top:338.9px">32</div><div class="hx" style="left:317.6px;top:338.9px">32</div><div class="hx" style="left:340.7px;top:338.9px">32</div><div class="hx" style="left:363.8px;top:338.9px">32</div><div class="hx" style="left:386.9px;top:338.9px">32</div><div class="hx" style="left:410.0px;top:338.9px">32</div><div class="hx" style="left:440.8px;top:338.9px">32</div><div class="hx" style="left:463.9px;top:338.9px">32</div><div class="hx" style="left:487.0px;top:338.9px">32</div><div class="hx" style="left:510.1px;top:338.9px">32</div><div class="hx" style="left:533.2px;top:338.9px">32</div><div class="hx" style="left:556.3px;top:338.9px">32</div><div class="hx" style="left:579.4px;top:338.9px">32</div><div class="hx" style="left:602.5px;top:338.9px">32</div><div class="hx" style="left:630.2px;top:338.9px;letter-spacing:0.075px">2222222222222222</div>
<div class="hx" style="left:167px;top:354.1px;color:#1010e8;-webkit-text-stroke:0.05px #fff">02193C20</div><div class="hx" style="left:248.3px;top:354.1px">32</div><div class="hx" style="left:271.4px;top:354.1px">32</div><div class="hx" style="left:294.5px;top:354.1px">32</div><div class="hx" style="left:317.6px;top:354.1px">32</div><div class="hx" style="left:340.7px;top:354.1px">32</div><div class="hx" style="left:363.8px;top:354.1px">32</div><div class="hx" style="left:386.9px;top:354.1px">32</div><div class="hx" style="left:410.0px;top:354.1px">32</div><div class="hx" style="left:440.8px;top:354.1px">32</div><div class="hx" style="left:463.9px;top:354.1px">32</div><div class="hx" style="left:487.0px;top:354.1px">32</div><div class="hx" style="left:510.1px;top:354.1px">32</div><div class="hx" style="left:533.2px;top:354.1px">32</div><div class="hx" style="left:556.3px;top:354.1px">32</div><div class="hx" style="left:579.4px;top:354.1px">32</div><div class="hx" style="left:602.5px;top:354.1px">32</div><div class="hx" style="left:630.2px;top:354.1px;letter-spacing:0.075px">2222222222222222</div>
<div class="hx" style="left:167px;top:369.4px;color:#1010e8;-webkit-text-stroke:0.05px #fff">02193C30</div><div class="hx" style="left:248.3px;top:369.4px">32</div><div class="hx" style="left:271.4px;top:369.4px">32</div><div class="hx" style="left:294.5px;top:369.4px">32</div><div class="hx" style="left:317.6px;top:369.4px">32</div><div class="hx" style="left:340.7px;top:369.4px">32</div><div class="hx" style="left:363.8px;top:369.4px">32</div><div class="hx" style="left:386.9px;top:369.4px">32</div><div class="hx" style="left:410.0px;top:369.4px">32</div><div class="hx" style="left:440.8px;top:369.4px">32</div><div class="hx" style="left:463.9px;top:369.4px">32</div><div class="hx" style="left:487.0px;top:369.4px">32</div><div class="hx" style="left:510.1px;top:369.4px">32</div><div class="hx" style="left:533.2px;top:369.4px">32</div><div class="hx" style="left:556.3px;top:369.4px">32</div><div class="hx" style="left:579.4px;top:369.4px">32</div><div class="hx" style="left:602.5px;top:369.4px">32</div><div class="hx" style="left:630.2px;top:369.4px;letter-spacing:0.075px">2222222222222222</div>
<div class="hx" style="left:167px;top:384.6px;color:#1010e8;-webkit-text-stroke:0.05px #fff">02193C40</div><div class="hx" style="left:248.3px;top:384.6px">32</div><div class="hx" style="left:271.4px;top:384.6px">32</div><div class="hx" style="left:294.5px;top:384.6px">32</div><div class="hx" style="left:317.6px;top:384.6px">32</div><div class="hx" style="left:340.7px;top:384.6px">32</div><div class="hx" style="left:363.8px;top:384.6px">32</div><div class="hx" style="left:386.9px;top:384.6px">32</div><div class="hx" style="left:410.0px;top:384.6px">32</div><div class="hx" style="left:440.8px;top:384.6px">32</div><div class="hx" style="left:463.9px;top:384.6px">32</div><div class="hx" style="left:487.0px;top:384.6px">32</div><div class="hx" style="left:510.1px;top:384.6px">32</div><div class="hx" style="left:533.2px;top:384.6px">32</div><div class="hx" style="left:556.3px;top:384.6px">32</div><div class="hx" style="left:579.4px;top:384.6px">32</div><div class="hx" style="left:602.5px;top:384.6px">32</div><div class="hx" style="left:630.2px;top:384.6px;letter-spacing:0.075px">2222222222222222</div>
<div class="hx" style="left:167px;top:399.9px;color:#1010e8;-webkit-text-stroke:0.05px #fff">02193C50</div><div class="hx" style="left:248.3px;top:399.9px">32</div><div class="hx" style="left:271.4px;top:399.9px">32</div><div class="hx" style="left:294.5px;top:399.9px">32</div><div class="hx" style="left:317.6px;top:399.9px">32</div><div class="hx" style="left:340.7px;top:399.9px">32</div><div class="hx" style="left:363.8px;top:399.9px">32</div><div class="hx" style="left:386.9px;top:399.9px">32</div><div class="hx" style="left:410.0px;top:399.9px">32</div><div class="hx" style="left:440.8px;top:399.9px">32</div><div class="hx" style="left:463.9px;top:399.9px">32</div><div class="hx" style="left:487.0px;top:399.9px">32</div><div class="hx" style="left:510.1px;top:399.9px">32</div><div class="hx" style="left:533.2px;top:399.9px">32</div><div class="hx" style="left:556.3px;top:399.9px">32</div><div class="hx" style="left:579.4px;top:399.9px">32</div><div class="hx" style="left:602.5px;top:399.9px">32</div><div class="hx" style="left:630.2px;top:399.9px;letter-spacing:0.075px">2222222222222222</div>
<div class="hx" style="left:167px;top:415.2px;color:#1010e8;-webkit-text-stroke:0.05px #fff">02193C60</div><div class="hx" style="left:248.3px;top:415.2px">32</div><div class="hx" style="left:271.4px;top:415.2px">32</div><div class="hx" style="left:294.5px;top:415.2px">32</div><div class="hx" style="left:317.6px;top:415.2px">32</div><div class="hx" style="left:340.7px;top:415.2px">32</div><div class="hx" style="left:363.8px;top:415.2px">32</div><div class="hx" style="left:386.9px;top:415.2px">32</div><div class="hx" style="left:410.0px;top:415.2px">32</div><div class="hx" style="left:440.8px;top:415.2px">32</div><div class="hx" style="left:463.9px;top:415.2px">32</div><div class="hx" style="left:487.0px;top:415.2px">32</div><div class="hx" style="left:510.1px;top:415.2px">32</div><div class="hx" style="left:533.2px;top:415.2px">32</div><div class="hx" style="left:556.3px;top:415.2px">32</div><div class="hx" style="left:579.4px;top:415.2px">32</div><div class="hx" style="left:602.5px;top:415.2px">32</div><div class="hx" style="left:630.2px;top:415.2px;letter-spacing:0.075px">2222222222222222</div>
<div class="hx" style="left:167px;top:430.4px;color:#1010e8;-webkit-text-stroke:0.05px #fff">02193C70</div><div class="hx" style="left:248.3px;top:430.4px">32</div><div class="hx" style="left:271.4px;top:430.4px">32</div><div class="hx" style="left:294.5px;top:430.4px">32</div><div class="hx" style="left:317.6px;top:430.4px">32</div><div class="hx" style="left:340.7px;top:430.4px">32</div><div class="hx" style="left:363.8px;top:430.4px">32</div><div class="hx" style="left:386.9px;top:430.4px">32</div><div class="hx" style="left:410.0px;top:430.4px">32</div><div class="hx" style="left:440.8px;top:430.4px">32</div><div class="hx" style="left:463.9px;top:430.4px">32</div><div class="hx" style="left:487.0px;top:430.4px">32</div><div class="hx" style="left:510.1px;top:430.4px">32</div><div class="hx" style="left:533.2px;top:430.4px">32</div><div class="hx" style="left:556.3px;top:430.4px">32</div><div class="hx" style="left:579.4px;top:430.4px">32</div><div class="hx" style="left:602.5px;top:430.4px">32</div><div class="hx" style="left:630.2px;top:430.4px;letter-spacing:0.075px">2222222222222222</div>
<div class="hx" style="left:167px;top:445.7px;color:#1010e8;-webkit-text-stroke:0.05px #fff">02193C80</div><div class="hx" style="left:248.3px;top:445.7px">32</div><div class="hx" style="left:271.4px;top:445.7px">32</div><div class="hx" style="left:294.5px;top:445.7px">32</div><div class="hx" style="left:317.6px;top:445.7px">32</div><div class="hx" style="left:340.7px;top:445.7px">32</div><div class="hx" style="left:363.8px;top:445.7px">32</div><div class="hx" style="left:386.9px;top:445.7px">32</div><div class="hx" style="left:410.0px;top:445.7px">32</div><div class="hx" style="left:440.8px;top:445.7px">32</div><div class="hx" style="left:463.9px;top:445.7px">32</div><div class="hx" style="left:487.0px;top:445.7px">32</div><div class="hx" style="left:510.1px;top:445.7px">32</div><div class="hx" style="left:533.2px;top:445.7px">32</div><div class="hx" style="left:556.3px;top:445.7px">32</div><div class="hx" style="left:579.4px;top:445.7px">32</div><div class="hx" style="left:602.5px;top:445.7px">32</div><div class="hx" style="left:630.2px;top:445.7px;letter-spacing:0.075px">2222222222222222</div>
<div class="hx" style="left:167px;top:460.9px;color:#1010e8;-webkit-text-stroke:0.05px #fff">02193C90</div><div class="hx" style="left:248.3px;top:460.9px">32</div><div class="hx" style="left:271.4px;top:460.9px">32</div><div class="hx" style="left:294.5px;top:460.9px">32</div><div class="hx" style="left:317.6px;top:460.9px">32</div><div class="hx" style="left:340.7px;top:460.9px">32</div><div class="hx" style="left:363.8px;top:460.9px">32</div><div class="hx" style="left:386.9px;top:460.9px">32</div><div class="hx" style="left:410.0px;top:460.9px">32</div><div class="hx" style="left:440.8px;top:460.9px">32</div><div class="hx" style="left:463.9px;top:460.9px">32</div><div class="hx" style="left:487.0px;top:460.9px">32</div><div class="hx" style="left:510.1px;top:460.9px">32</div><div class="hx" style="left:533.2px;top:460.9px">32</div><div class="hx" style="left:556.3px;top:460.9px">32</div><div class="hx" style="left:579.4px;top:460.9px">32</div><div class="hx" style="left:602.5px;top:460.9px">32</div><div class="hx" style="left:630.2px;top:460.9px;letter-spacing:0.075px">2222222222222222</div>
<div class="hx" style="left:167px;top:476.2px;color:#1010e8;-webkit-text-stroke:0.05px #fff">02193CA0</div><div class="hx" style="left:248.3px;top:476.2px">32</div><div class="hx" style="left:271.4px;top:476.2px">32</div><div class="hx" style="left:294.5px;top:476.2px">32</div><div class="hx" style="left:317.6px;top:476.2px">32</div><div class="hx" style="left:340.7px;top:476.2px">32</div><div class="hx" style="left:363.8px;top:476.2px">32</div><div class="hx" style="left:386.9px;top:476.2px">32</div><div class="hx" style="left:410.0px;top:476.2px">32</div><div class="hx" style="left:440.8px;top:476.2px">32</div><div class="hx" style="left:463.9px;top:476.2px">32</div><div class="hx" style="left:487.0px;top:476.2px">32</div><div class="hx" style="left:510.1px;top:476.2px">32</div><div class="hx" style="left:533.2px;top:476.2px">32</div><div class="hx" style="left:556.3px;top:476.2px">32</div><div class="hx" style="left:579.4px;top:476.2px">32</div><div class="hx" style="left:602.5px;top:476.2px">32</div><div class="hx" style="left:630.2px;top:476.2px;letter-spacing:0.075px">2222222222222222</div>
<div class="hx" style="left:167px;top:491.5px;color:#1010e8;-webkit-text-stroke:0.05px #fff">02193CB0</div><div class="hx" style="left:248.3px;top:491.5px">32</div><div class="hx" style="left:271.4px;top:491.5px">32</div><div class="hx" style="left:294.5px;top:491.5px">32</div><div class="hx" style="left:317.6px;top:491.5px">32</div><div class="hx" style="left:340.7px;top:491.5px">32</div><div class="hx" style="left:363.8px;top:491.5px">32</div><div class="hx" style="left:386.9px;top:491.5px">32</div><div class="hx" style="left:410.0px;top:491.5px">32</div><div class="hx" style="left:440.8px;top:491.5px">32</div><div class="hx" style="left:463.9px;top:491.5px">32</div><div class="hx" style="left:487.0px;top:491.5px">32</div><div class="hx" style="left:510.1px;top:491.5px">32</div><div class="hx" style="left:533.2px;top:491.5px">32</div><div class="hx" style="left:556.3px;top:491.5px">32</div><div class="hx" style="left:579.4px;top:491.5px">32</div><div class="hx" style="left:602.5px;top:491.5px">32</div><div class="hx" style="left:630.2px;top:491.5px;letter-spacing:0.075px">2222222222222222</div>
<div class="hx" style="left:167px;top:506.7px;color:#1010e8;-webkit-text-stroke:0.05px #fff">02193CC0</div><div class="hx" style="left:248.3px;top:506.7px">32</div><div class="hx" style="left:271.4px;top:506.7px">32</div><div class="hx" style="left:294.5px;top:506.7px">32</div><div class="hx" style="left:317.6px;top:506.7px">32</div><div class="hx" style="left:340.7px;top:506.7px">32</div><div class="hx" style="left:363.8px;top:506.7px">32</div><div class="hx" style="left:386.9px;top:506.7px">32</div><div class="hx" style="left:410.0px;top:506.7px">32</div><div class="hx" style="left:440.8px;top:506.7px">32</div><div class="hx" style="left:463.9px;top:506.7px">32</div><div class="hx" style="left:487.0px;top:506.7px">32</div><div class="hx" style="left:510.1px;top:506.7px">32</div><div class="hx" style="left:533.2px;top:506.7px">32</div><div class="hx" style="left:556.3px;top:506.7px">32</div><div class="hx" style="left:579.4px;top:506.7px">32</div><div class="hx" style="left:602.5px;top:506.7px">32</div><div class="hx" style="left:630.2px;top:506.7px;letter-spacing:0.075px">2222222222222222</div>
<div class="a" style="left:624px;top:301px;width:33px;height:18px;background:#d4d0c8;box-shadow:inset -1px -1px 0 #808080, inset 1px 0 0 #fff"></div><svg style="left:633px;top:306.5px" width="15" height="7" viewBox="0 0 15 7"><path d="M0 0h15L7.5 7z" fill="#fff"/><path d="M7.5 7L15 0" stroke="#808080" stroke-width="1" fill="none"/></svg>
<div class="a" style="left:657px;top:301px;width:34px;height:18px;background:#dedad2;box-shadow:inset -1px -1px 0 #c0bcb4, inset 1px 0 0 #fff"></div><svg style="left:666px;top:303.5px" width="16" height="13" viewBox="0 0 16 13"><path d="M.5 3.5h4l1-1.5h9v10h-14z" fill="#f4e890" stroke="#c8b040" stroke-width=".8"/><circle cx="7" cy="5" r="3.2" fill="#c8f0ff" stroke="#3070c0" stroke-width="1.2"/><path d="M9.5 7.5l4 4" stroke="#2050b0" stroke-width="2"/></svg>
<div class="a" style="left:759px;top:301px;width:15px;height:232px;background:#eceae6"></div>
<div class="a" style="left:759px;top:301.5px;width:15px;height:15.0px;background:#d4d0c8;box-shadow:inset -1px -1px 0 #404040, inset 1px 1px 0 #d4d0c8, inset -2px -2px 0 #808080, inset 2px 2px 0 #fff"></div><svg style="left:763.5px;top:307.0px" width="7" height="4" viewBox="0 0 7 4"><path d="M0 4L3.5 0L7 4z" fill="#000"/></svg>
<div class="a" style="left:759px;top:379.0px;width:15px;height:15.0px;background:#d4d0c8;box-shadow:inset -1px -1px 0 #404040, inset 1px 1px 0 #d4d0c8, inset -2px -2px 0 #808080, inset 2px 2px 0 #fff"></div>
<div class="a" style="left:759px;top:517.3px;width:15px;height:15.0px;background:#d4d0c8;box-shadow:inset -1px -1px 0 #404040, inset 1px 1px 0 #d4d0c8, inset -2px -2px 0 #808080, inset 2px 2px 0 #fff"></div><svg style="left:763.5px;top:522.8px" width="7" height="4" viewBox="0 0 7 4"><path d="M0 0L3.5 4L7 0z" fill="#000"/></svg>
<div class="a" style="left:153px;top:533px;width:722px;height:19px;background:#d4d0c8"></div>
<div class="a" style="left:155.0px;top:535px;width:251.0px;height:16.5px;box-shadow:inset 1px 1px 0 #a09c94, inset -1px -1px 0 #fff"></div><div class="a" style="left:408.0px;top:535px;width:201.5px;height:16.5px;box-shadow:inset 1px 1px 0 #a09c94, inset -1px -1px 0 #fff"></div><div class="a" style="left:611.5px;top:535px;width:174.5px;height:16.5px;box-shadow:inset 1px 1px 0 #a09c94, inset -1px -1px 0 #fff"></div><div class="a" style="left:788.0px;top:535px;width:92.0px;height:16.5px;box-shadow:inset 1px 1px 0 #a09c94, inset -1px -1px 0 #fff"></div>
<div class="t" style="left:158.7px;top:537.4px;font-size:11.30px;color:#1a1a6e;transform:scaleX(0.917);">Sector 68766 of 206324</div><div class="t" style="left:412.7px;top:537.4px;font-size:11.30px;color:#1a1a6e;transform:scaleX(0.865);">Offset:</div><div class="t" style="left:561.6px;top:537.4px;font-size:11.30px;color:#1a1a6e;transform:scaleX(0.887);">2193C00</div><div class="t" style="left:758.7px;top:537.4px;font-size:11.30px;color:#1a1a6e;transform:scaleX(0.923);">= 50</div><div class="t" style="left:791.2px;top:537.4px;font-size:11.30px;color:#1a1a6e;transform:scaleX(0.913);">Block:</div>
<div class="a" style="left:3.5px;top:150.5px;width:134.5px;height:68.5px;background:#d4d0c8;box-shadow:inset 1px 1px 0 #d4d0c8, inset 2px 2px 0 #fff, inset -1px -1px 0 #404040, inset -2px -2px 0 #808080"></div>
<div class="a" style="left:7px;top:154.5px;width:127.5px;height:13.5px;background:linear-gradient(90deg,#808080,#c0c0c0)"></div>
<div class="t" style="left:8.4px;top:157.3px;font-size:10.80px;color:#d4d0c8;transform:scaleX(1.014);">Data Interpreter</div>
<div class="a" style="left:122.5px;top:156px;width:10px;height:10px;background:#d4d0c8;box-shadow:inset -1px -1px 0 #404040, inset 1px 1px 0 #fff, inset -2px -2px 0 #808080"></div><svg style="left:124.5px;top:158px" width="6" height="6" viewBox="0 0 6 6"><path d="M0.5 0.5l5 5M5.500 0.5l-5 5" stroke="#000" stroke-width="0.9"/></svg>
<div class="a" style="left:64.5px;top:172.8px;width:69.5px;height:11.8px;background:#fff"></div><div class="r" style="right:810.5px;top:174.5px;font-size:10.40px;color:#000;transform:scaleX(0.930);">8 Bit (±):</div><div class="t" style="left:66.0px;top:174.5px;font-size:10.40px;color:#000;transform:scaleX(0.930);">50</div>
<div class="a" style="left:64.5px;top:187.2px;width:69.5px;height:11.8px;background:#fff"></div><div class="r" style="right:810.5px;top:188.9px;font-size:10.40px;color:#000;transform:scaleX(0.930);">16 Bit (±):</div><div class="t" style="left:66.0px;top:188.9px;font-size:10.40px;color:#000;transform:scaleX(0.930);">12850</div>
<div class="a" style="left:64.5px;top:201.6px;width:69.5px;height:11.8px;background:#fff"></div><div class="r" style="right:810.5px;top:203.3px;font-size:10.40px;color:#000;transform:scaleX(0.930);">32 Bit (±):</div><div class="t" style="left:66.0px;top:203.3px;font-size:10.40px;color:#000;transform:scaleX(0.930);">842150450</div>
</div></body></html>
